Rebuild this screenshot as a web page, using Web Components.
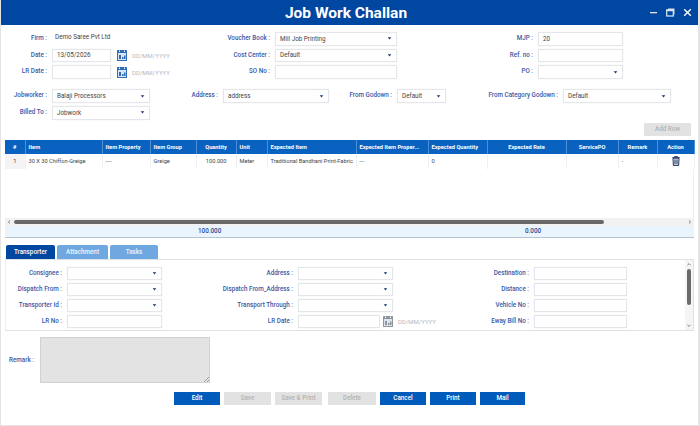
<!DOCTYPE html>
<html>
<head>
<meta charset="utf-8">
<title>Job Work Challan</title>
<style>
    html, body { margin: 0; padding: 0; background: #fff; }
    body { font-family: Roboto, "Liberation Sans", sans-serif; font-size: 6.3px; color: #444; }
</style>
</head>
<body>
<challan-window>
    <challan-titlebar slot="title">Job Work Challan</challan-titlebar>

    <form-grid columns="223px 174px 226px" row="16.7px" style="padding-top:7px">
        <form-field lw="47"><span style="padding-left:3px">Demo Saree Pvt Ltd</span><span slot="label">Firm :</span></form-field>
        <form-field lw="47"><span slot="label">Voucher Book :</span><text-box select w="122">Mill Job Printing</text-box></form-field>
        <form-field lw="136"><span slot="label">MJP :</span><text-box w="85">20</text-box></form-field>

        <form-field lw="47"><span slot="label">Date :</span><date-box w="59" gap="6" color="#2f6cb5">13/05/2026</date-box></form-field>
        <form-field lw="47"><span slot="label">Cost Center :</span><text-box select w="122">Default</text-box></form-field>
        <form-field lw="136"><span slot="label">Ref. no :</span><text-box w="85"></text-box></form-field>

        <form-field lw="47"><span slot="label">LR Date :</span><date-box w="59" gap="6" color="#2f6cb5"></date-box></form-field>
        <form-field lw="47"><span slot="label">SO No :</span><text-box w="122"></text-box></form-field>
        <form-field lw="136"><span slot="label">PO :</span><text-box select w="85"></text-box></form-field>
    </form-grid>

    <form-grid columns="150px 179px 117px 225px" row="16.7px" style="padding-top:7.3px">
        <form-field lw="47"><span slot="label">Jobworker :</span><text-box select w="98">Balaji Processors</text-box></form-field>
        <form-field lw="68"><span slot="label">Address :</span><text-box select w="106">address</text-box></form-field>
        <form-field lw="63"><span slot="label">From Godown :</span><text-box select w="49">Default</text-box></form-field>
        <form-field lw="112"><span slot="label">From Category Godown :</span><text-box select w="108">Default</text-box></form-field>
        <form-field lw="47"><span slot="label">Billed To :</span><text-box select w="98">Jobwork</text-box></form-field>
    </form-grid>

    <action-row end style="margin:0 7px 4px 0">
        <action-button disabled w="47">Add Row</action-button>
    </action-row>

    <items-table></items-table>

    <tab-panel></tab-panel>

    <remark-box>Remark :</remark-box>

    <action-row style="margin:9px 0 0 174px">
        <action-button w="46">Edit</action-button>
        <action-button disabled w="47">Save</action-button>
        <action-button disabled w="47">Save &amp; Print</action-button>
        <action-button disabled w="48" style="margin-left:2px">Delete</action-button>
        <action-button w="46">Cancel</action-button>
        <action-button w="46">Print</action-button>
        <action-button w="45">Mail</action-button>
    </action-row>
</challan-window>

<script>
/**
 * Small helper, every element below just clones its markup into an open shadow root.
 */
function shadow(el, html) {
    el.attachShadow({mode: "open"});
    el.shadowRoot.innerHTML = html;
}

class ChallanWindow extends HTMLElement {
    constructor() {
        super();
        shadow(this, `
            <style>
                :host {
                    display: block;
                    box-sizing: border-box;
                    width: 700px;
                    height: 426px;
                    overflow: hidden;
                    border-left: 1px solid #e4e4e4;
                    border-right: 2px solid #e4e4e4;
                    border-bottom: 1px solid #e4e4e4;
                }
                .body { margin-left: -1px; }
            </style>
            <slot name="title"></slot>
            <div class="body"><slot></slot></div>
        `);
    }
}

class ChallanTitlebar extends HTMLElement {
    constructor() {
        super();
        shadow(this, `
            <style>
                :host {
                    display: flex;
                    align-items: center;
                    justify-content: center;
                    position: relative;
                    height: 25px;
                    margin: 0 -2px 0 -1px;
                    background: #0047a1;
                    color: #fff;
                    font: 700 15.5px Roboto, sans-serif;
                    padding-right: 8px;
                }
                .ctl {
                    position: absolute;
                    right: 8px;
                    top: 8px;
                    display: flex;
                    gap: 8px;
                }
            </style>
            <slot></slot>
            <div class="ctl">
                <svg width="9" height="9" viewBox="0 0 9 9"><rect x="1" y="4" width="7" height="1.3" fill="#dfe9f6"/></svg>
                <svg width="9" height="9" viewBox="0 0 9 9"><rect x="2" y="0.5" width="6.5" height="6" fill="#cfdff2"/><rect x="0.7" y="2" width="6.6" height="6" fill="#0047a1" stroke="#dfe9f6" stroke-width="1.2"/><rect x="0.5" y="1.6" width="7" height="1.6" fill="#dfe9f6"/></svg>
                <svg width="9" height="9" viewBox="0 0 9 9"><path d="M1.2 1.2 L7.8 7.8 M7.8 1.2 L1.2 7.8" stroke="#fff" stroke-width="1.4"/></svg>
            </div>
        `);
    }
}

class FormGrid extends HTMLElement {
    constructor() {
        super();
        shadow(this, `
            <style>
                :host { display: block; }
                .g {
                    display: grid;
                    grid-template-columns: ${this.getAttribute("columns")};
                    grid-auto-rows: ${this.getAttribute("row")};
                }
            </style>
            <div class="g"><slot></slot></div>
        `);
    }
}

class FormField extends HTMLElement {
    constructor() {
        super();
        shadow(this, `
            <style>
                :host {
                    display: flex;
                    align-items: flex-start;
                    gap: 5px;
                    font: 6.3px Roboto, sans-serif;
                    color: #444;
                }
                .lbl {
                    flex: none;
                    width: ${this.getAttribute("lw")}px;
                    height: 14px;
                    line-height: 13px;
                    text-align: right;
                    font-weight: 500;
                    color: #3c57a5;
                    white-space: nowrap;
                }
                .ctl { line-height: 11px; }
            </style>
            <div class="lbl"><slot name="label"></slot></div>
            <div class="ctl"><slot></slot></div>
        `);
    }
}

class TextBox extends HTMLElement {
    constructor() {
        super();
        const caret = this.hasAttribute("select")
            ? `<svg width="5" height="3" viewBox="0 0 5 3"><path d="M0.7 0.3 H4.3 L2.5 2.6 Z" fill="#17386f"/></svg>` : "";
        shadow(this, `
            <style>
                :host {
                    display: flex;
                    align-items: center;
                    justify-content: space-between;
                    box-sizing: border-box;
                    width: ${this.getAttribute("w")}px;
                    height: 13.5px;
                    padding: 0 4px;
                    background: #fff;
                    border: 1px solid #e4e6ea;
                    box-shadow: 0 0 1px #e8e8e8;
                    font: 6.3px Roboto, sans-serif;
                    color: #444;
                    white-space: nowrap;
                    flex: none;
                }
            </style>
            <span><slot></slot></span>${caret}
        `);
    }
}

class DateBox extends HTMLElement {
    constructor() {
        super();
        const c = this.getAttribute("color");
        shadow(this, `
            <style>
                :host { display: flex; align-items: center; font: 6px Roboto, sans-serif; }
                svg { margin: 0 5px 0 ${this.getAttribute("gap")}px; flex: none; }
                .hint { color: #b4b8c2; white-space: nowrap; }
            </style>
            <text-box w="${this.getAttribute("w")}"><slot></slot></text-box>
            <svg width="10" height="11" viewBox="0 0 10 11">
                <rect x="0" y="0" width="10" height="11" rx="0.6" fill="${c}"/>
                <rect x="1" y="3" width="8" height="7" fill="#dbe5f2"/>
                <path d="M2 5H4V9H2ZM5 7H6.5V9H5ZM7 5.5H8.5V9H7Z" fill="${c}"/>
                <rect x="2" y="0.6" width="1" height="1.4" fill="#fff"/><rect x="7" y="0.6" width="1" height="1.4" fill="#fff"/>
            </svg>
            <span class="hint">DD/MM/YYYY</span>
        `);
    }
}

class ActionRow extends HTMLElement {
    constructor() {
        super();
        shadow(this, `
            <style>
                :host {
                    display: flex;
                    gap: 4px;
                    justify-content: ${this.hasAttribute("end") ? "flex-end" : "flex-start"};
                }
            </style>
            <slot></slot>
        `);
    }
}

class ActionButton extends HTMLElement {
    constructor() {
        super();
        const off = this.hasAttribute("disabled");
        shadow(this, `
            <style>
                :host {
                    display: flex;
                    align-items: center;
                    justify-content: center;
                    box-sizing: border-box;
                    width: ${this.getAttribute("w")}px;
                    height: 13px;
                    background: ${off ? "#e2e2e2" : "#005bbb"};
                    color: ${off ? "#b3b3b3" : "#fff"};
                    font: 500 6.3px Roboto, sans-serif;
                    white-space: nowrap;
                }
            </style>
            <slot></slot>
        `);
    }
}

const COLS = [20, 77, 48, 46, 40, 31, 89, 72, 59, 79, 52, 39, 37];
const HEAD = [
    ["#", "c"], ["Item"], ["Item Property"], ["Item Group"], ["Quantity", "c"], ["Unit"],
    ["Expected Item"], ["Expected Item Proper..."], ["Expected Quantity"], ["Expected Rate", "c"],
    ["ServicePO", "c"], ["Remark", "c"], ["Action", "c"]
];
const ROW = ["1", "30 X 30 Chiffon-Greige", "----", "Greige", "100.000", "Meter",
    "Traditional Bandhani Print-Fabric", "---", "0", "", "", "-", ""];

class ItemsTable extends HTMLElement {
    constructor() {
        super();
        const cols = COLS.map(w => `<col style="width:${w}px">`).join("");
        const head = HEAD.map(h => `<th class="${h[1] || ""}">${h[0]}</th>`).join("");
        const row = ROW.map((t, i) => {
            if (i === 12) {
                return `<td class="c"><svg width="8" height="10" viewBox="0 0 8 10"><path d="M0.3 1.6H7.7M2.6 1.4V0.4H5.4V1.4" fill="none" stroke="#1a2f60" stroke-width="0.9"/><path d="M1 2.2H7L6.6 9.6H1.4Z" fill="none" stroke="#1a2f60" stroke-width="1"/><path d="M2.8 3.4V8.4M4 3.4V8.4M5.2 3.4V8.4" stroke="#1a2f60" stroke-width="0.8"/></svg></td>`;
            }
            return `<td class="${i === 0 ? "n" : i === 4 ? "r" : ""}">${t}</td>`;
        }).join("");
        shadow(this, `
            <style>
                :host {
                    display: block;
                    width: 689px;
                    margin-left: 5px;
                    font: 5.7px Roboto, sans-serif;
                    color: #444;
                }
                .rows { height: 78px; border-right: 1px solid #eee; box-sizing: border-box; }
                table { border-collapse: collapse; table-layout: fixed; width: 689px; }
                th {
                    height: 14px;
                    padding: 0 3px;
                    background: #0a62c0;
                    color: #fff;
                    font-weight: 700;
                    text-align: left;
                    border-right: 1px solid #4d8fd6;
                    white-space: nowrap;
                    overflow: hidden;
                }
                td {
                    height: 15px;
                    padding: 0 3px;
                    border-right: 1px solid #eef0f2;
                    white-space: nowrap;
                    overflow: hidden;
                    background: #fff;
                }
                td svg { display: block; margin: auto; }
                .c { text-align: center; }
                .r { text-align: right; padding-right: 9px; }
                .n { text-align: center; background: #f4f4f4; }
                .bar {
                    display: flex;
                    align-items: center;
                    height: 8px;
                    background: #f1f1f1;
                    color: #666;
                }
                .arrow { flex: none; width: 9px; height: 8px; }
                .arrow path { fill: none; stroke: #666; stroke-width: 0.8; }
                .thumb { flex: none; width: 590px; height: 4px; border-radius: 2px; background: #686868; }
                .spacer { flex: 1; }
                .foot {
                    display: grid;
                    grid-template-columns: ${COLS.map(w => w + "px").join(" ")};
                    align-items: center;
                    height: 12px;
                    background: #eaf4fc;
                    border-bottom: 1px solid #b6c4d2;
                    box-sizing: border-box;
                    color: #2b4a96;
                    font: 500 6.3px Roboto, sans-serif;
                }
                .foot span:nth-child(1) { grid-column: 5; padding-left: 2px; }
                .foot span:nth-child(2) { grid-column: 10; padding-left: 38px; }
            </style>
            <div class="rows">
                <table>
                    <colgroup>${cols}</colgroup>
                    <thead><tr>${head}</tr></thead>
                    <tbody><tr>${row}</tr></tbody>
                </table>
            </div>
            <div class="bar">
                <svg class="arrow" viewBox="0 0 9 8"><path d="M5 2.5 L3.4 4 L5 5.5"/></svg>
                <div class="thumb"></div>
                <div class="spacer"></div>
                <svg class="arrow" viewBox="0 0 9 8"><path d="M4 2.5 L5.6 4 L4 5.5"/></svg>
            </div>
            <div class="foot"><span>100.000</span><span>0.000</span></div>
        `);
    }
}

class TabPanel extends HTMLElement {
    constructor() {
        super();
        shadow(this, `
            <style>
                :host { display: block; width: 689px; margin: 7px 0 0 5px; font: 6.3px Roboto, sans-serif; }
                .tabs { display: flex; gap: 2px; height: 14px; padding-left: 1px; }
                .tab {
                    display: flex;
                    align-items: center;
                    justify-content: center;
                    background: #6fa8e0;
                    color: #eef5fc;
                    font-weight: 500;
                    border-radius: 2px 2px 0 0;
                }
                .on { background: #0047a1; color: #fff; }
                .panel {
                    position: relative;
                    display: grid;
                    grid-template-columns: 163px 224px 300px;
                    grid-auto-rows: 16px;
                    box-sizing: border-box;
                    height: 72px;
                    padding-top: 7px;
                    border: 1px solid #dfe1e4;
                    border-left-color: #eee;
                }
                .sb {
                    position: absolute;
                    top: 0;
                    right: 0;
                    bottom: 0;
                    width: 8px;
                    background: #f5f5f5;
                }
                .sb .thumb {
                    position: absolute;
                    left: 2px;
                    top: 9px;
                    width: 4px;
                    height: 36px;
                    border-radius: 2px;
                    background: #6b6b6b;
                }
                .sb svg { position: absolute; left: 1px; width: 6px; height: 5px; }
                .sb path { fill: none; stroke: #666; stroke-width: 0.8; }
            </style>
            <div class="tabs">
                <div class="tab on" style="width:49px">Transporter</div>
                <div class="tab" style="width:51px">Attachment</div>
                <div class="tab" style="width:48px">Tasks</div>
            </div>
            <div class="panel">
                <form-field lw="56"><span slot="label">Consignee :</span><text-box select w="95"></text-box></form-field>
                <form-field lw="124"><span slot="label">Address :</span><text-box select w="95"></text-box></form-field>
                <form-field lw="136"><span slot="label">Destination :</span><text-box w="93"></text-box></form-field>

                <form-field lw="56"><span slot="label">Dispatch From :</span><text-box select w="95"></text-box></form-field>
                <form-field lw="124"><span slot="label">Dispatch From_Address :</span><text-box select w="95"></text-box></form-field>
                <form-field lw="136"><span slot="label">Distance :</span><text-box w="93"></text-box></form-field>

                <form-field lw="56"><span slot="label">Transporter Id :</span><text-box select w="95"></text-box></form-field>
                <form-field lw="124"><span slot="label">Transport Through :</span><text-box select w="95"></text-box></form-field>
                <form-field lw="136"><span slot="label">Vehicle No :</span><text-box w="93"></text-box></form-field>

                <form-field lw="56"><span slot="label">LR No :</span><text-box w="95"></text-box></form-field>
                <form-field lw="124"><span slot="label">LR Date :</span><date-box w="82" gap="3" color="#8f9398"></date-box></form-field>
                <form-field lw="136"><span slot="label">Eway Bill No :</span><text-box w="93"></text-box></form-field>

                <div class="sb">
                    <svg style="top:2px" viewBox="0 0 6 5"><path d="M1.4 3.2 L3 1.6 L4.6 3.2"/></svg>
                    <div class="thumb"></div>
                    <svg style="bottom:2px" viewBox="0 0 6 5"><path d="M1.4 1.8 L3 3.4 L4.6 1.8"/></svg>
                </div>
            </div>
        `);
    }
}

class RemarkBox extends HTMLElement {
    constructor() {
        super();
        shadow(this, `
            <style>
                :host {
                    display: flex;
                    align-items: center;
                    gap: 6px;
                    margin: 6px 0 0 9px;
                    font: 500 6.3px Roboto, sans-serif;
                    color: #3c57a5;
                }
                .lbl { width: 25px; white-space: nowrap; }
                textarea {
                    display: block;
                    box-sizing: border-box;
                    width: 170px;
                    height: 46px;
                    margin: 0;
                    background: #e3e3e3;
                    border: 1px solid #d2d2d2;
                    border-radius: 0;
                    outline: none;
                }
                textarea::-webkit-resizer {
                    background: linear-gradient(135deg, transparent 45%, #a0a0a0 45%, #a0a0a0 58%, transparent 58%, transparent 72%, #a0a0a0 72%, #a0a0a0 85%, transparent 85%) right bottom / 5px 5px no-repeat;
                }
            </style>
            <div class="lbl"><slot></slot></div>
            <textarea readonly></textarea>
        `);
    }
}

customElements.define("challan-window", ChallanWindow);
customElements.define("challan-titlebar", ChallanTitlebar);
customElements.define("form-grid", FormGrid);
customElements.define("form-field", FormField);
customElements.define("text-box", TextBox);
customElements.define("date-box", DateBox);
customElements.define("action-row", ActionRow);
customElements.define("action-button", ActionButton);
customElements.define("items-table", ItemsTable);
customElements.define("tab-panel", TabPanel);
customElements.define("remark-box", RemarkBox);
</script>
</body>
</html>
